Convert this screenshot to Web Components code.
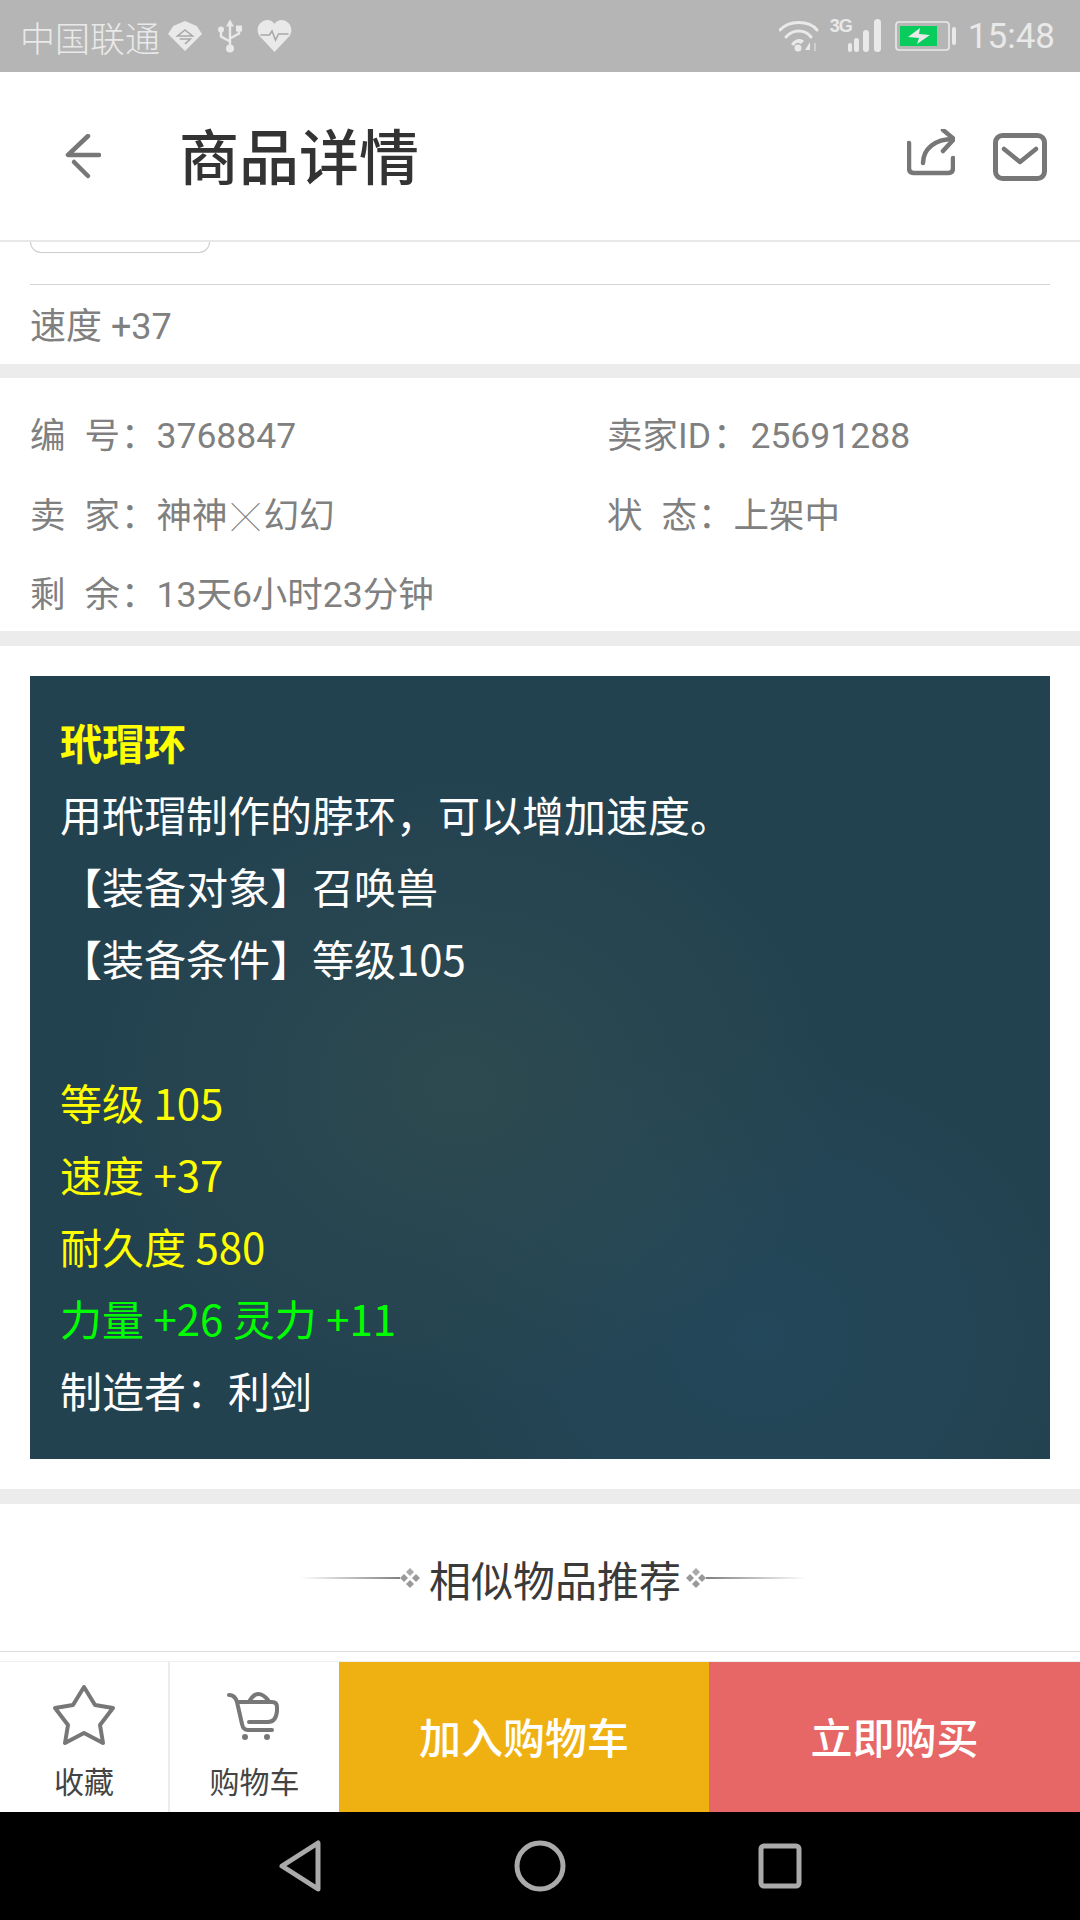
<!DOCTYPE html>
<html lang="zh">
<head>
<meta charset="utf-8">
<title>商品详情</title>
<style>
    html, body{
        margin: 0;
        padding: 0;
        background: #fff;
        font-family: Roboto, "Noto Sans CJK SC", sans-serif;
    }
    body{
        width: 1080px;
        height: 1920px;
        display: flex;
        flex-direction: column;
        overflow: hidden;
    }
    gap-bar{
        display: block;
        height: 14px;
        flex: none;
        background: #ececec;
    }
</style>
</head>
<body>
    <status-bar></status-bar>
    <app-header>商品详情</app-header>
    <spec-row>速度 +37</spec-row>
    <gap-bar></gap-bar>
    <info-grid></info-grid>
    <gap-bar style="height:15px"></gap-bar>
    <item-card></item-card>
    <gap-bar style="height:15px"></gap-bar>
    <section-title>相似物品推荐</section-title>
    <action-bar></action-bar>
    <nav-bar></nav-bar>

<script>
(function(){

    function define(name, html) {
        const template = document.createElement('template');
        template.innerHTML = html;
        window.customElements.define(name, class extends HTMLElement {
            constructor() {
                super();
                this.attachShadow({mode: 'open'});
                this.shadowRoot.appendChild(template.content.cloneNode(true));
            }
        });
    }

    define('status-bar', `
        <style>
            :host{
                display: flex;
                align-items: center;
                height: 72px;
                flex: none;
                background: #b5b5b5;
                color: #e9e9e9;
                padding: 0 25px 0 20px;
                font-size: 35px;
                font-family: "Noto Sans CJK SC", sans-serif;
            }
            svg{ display: block; flex: none; }
            .carrier{ font-weight: 300; margin-right: 8px; }
            .space{ flex: 1; }
            .net{
                align-self: flex-start;
                margin-top: 18px;
                font-family: "Liberation Sans Narrow", "Liberation Sans", sans-serif;
                font-size: 18px;
                line-height: 16px;
                font-weight: 700;
                letter-spacing: -1px;
                width: 18px;
                flex: none;
            }
            .time{ font-family: Roboto, sans-serif; font-size: 35px; margin-left: 11px; }
        </style>
        <span class="carrier">中国联通</span>
        <svg width="34" height="32" viewBox="0 0 32 32" preserveAspectRatio="none" style="margin-right:16px">
            <path d="M16 1 L27 6 L32 14 L16 31 L0 14 L5 6 Z" fill="#e9e9e9"/>
            <path d="M16 10 L23 16 L9 16 Z M11 19 H21 L16 24" fill="none" stroke="#a8a8a8" stroke-width="1.6"/>
        </svg>
        <svg width="24" height="35" viewBox="0 0 24 34" style="margin-right:15px">
            <path d="M12 0 L16 7 H8 Z" fill="#e9e9e9"/>
            <path d="M12 6 V28 M12 22 L3 17 V11 M12 19 L21 14 V10" fill="none" stroke="#e9e9e9" stroke-width="2.4"/>
            <circle cx="12" cy="29" r="4" fill="#e9e9e9"/>
            <circle cx="3" cy="10" r="3" fill="#e9e9e9"/>
            <rect x="18" y="6" width="6" height="6" fill="#e9e9e9"/>
        </svg>
        <svg width="35" height="32" viewBox="0 0 34 32">
            <path d="M17 32 L2 16 C-3 8 3 0 10 0 C13 0 16 2 17 4 C18 2 21 0 24 0 C31 0 37 8 32 16 Z" fill="#e9e9e9"/>
            <path d="M3 15 H12 L14.5 11 L18 20 L21 14 H31" fill="none" stroke="#a8a8a8" stroke-width="1.6"/>
        </svg>
        <span class="space"></span>
        <svg width="40" height="34" viewBox="0 0 40 34" style="margin-right:11px">
            <g fill="none" stroke="#e9e9e9" stroke-linecap="round">
                <path d="M1 11 C10 1 30 1 38 11" stroke-width="3"/>
                <path d="M7 18 C14 10 26 10 32 18" stroke-width="3"/>
            </g>
            <path d="M12 25 C16 19 23 19 25 22 L22 25 C19 23 17 23 15 27 Z" fill="#e9e9e9"/>
            <circle cx="19" cy="29" r="3.5" fill="#e9e9e9"/>
            <path d="M31 23 L26 31 H31 Z" fill="#e9e9e9"/>
            <path d="M36 24 V32" stroke="#cfcfcf" stroke-width="2"/>
        </svg>
        <span class="net">3G</span>
        <svg width="34" height="34" viewBox="18 0 34 34" style="margin-right:13px">
            <g fill="#e9e9e9">
                <rect x="18" y="24" width="4" height="9" rx="2"/>
                <rect x="24" y="19" width="5" height="14" rx="2.5"/>
                <rect x="33" y="11" width="6" height="22" rx="3"/>
                <rect x="44" y="0" width="7" height="33" rx="3.5"/>
            </g>
        </svg>
        <svg width="62" height="30" viewBox="0 0 62 30">
            <rect x="1" y="1" width="53" height="28" rx="3" fill="none" stroke="#e9e9e9" stroke-width="1.6"/>
            <rect x="5" y="5" width="37" height="20" fill="#08cc5c"/>
            <path d="M13 16 L25 7 L24 13 L35 14 L22 23 L24 17 Z" fill="#e9e9e9"/>
            <rect x="57" y="6" width="4" height="18" rx="2" fill="#e9e9e9"/>
        </svg>
        <span class="time">15:48</span>
    `);

    define('app-header', `
        <style>
            :host{
                display: flex;
                align-items: center;
                flex: none;
                height: 168px;
                border-bottom: 2px solid #e8e8e8;
                background: #fff;
                font-family: "Noto Sans CJK SC", sans-serif;
            }
            svg{ display: block; flex: none; }
            .back{ margin: 1px 78px 0 65px; }
            .title{ flex: 1; font-size: 60px; font-weight: 500; color: #333; line-height: 168px; position: relative; top: -2px; }
            .icons{ display: flex; align-items: center; gap: 38px; margin-right: 33px; }
            .share{ margin-top: -6px; }
            .mail{ margin-top: 2px; }
        </style>
        <svg class="back" width="36" height="46" viewBox="0 0 36 46">
            <g fill="none" stroke="#777" stroke-linecap="round" stroke-linejoin="round">
                <path d="M23 2 L3 21 H34" stroke-width="4.5"/>
                <path d="M9 28 L23 42" stroke-width="4.5"/>
            </g>
        </svg>
        <span class="title"><slot></slot></span>
        <div class="icons">
            <svg class="share" width="48" height="48" viewBox="0 0 48 48">
                <g fill="none" stroke="#777" stroke-width="4.5" stroke-linecap="round" stroke-linejoin="round">
                    <path d="M2 14 V39 Q2 44 7 44 H41 Q46 44 46 39 V29"/>
                    <path d="M16 34 C16 20 28 10 46 10"/>
                    <path d="M36 1 L47 10 L36 22"/>
                </g>
            </svg>
            <svg class="mail" width="54" height="48" viewBox="0 0 54 48">
                <rect x="2.5" y="2.5" width="49" height="43" rx="7" fill="none" stroke="#777" stroke-width="5"/>
                <path d="M11 16 L27 29 L43 16" fill="none" stroke="#777" stroke-width="4.5" stroke-linecap="round" stroke-linejoin="round"/>
            </svg>
        </div>
    `);

    define('spec-row', `
        <style>
            :host{
                display: block;
                flex: none;
                background: #fff;
                padding: 0 30px;
                color: #808080;
                font-size: 36px;
                font-family: Roboto, "Noto Sans CJK SC", sans-serif;
            }
            .tag{
                width: 178px;
                height: 10px;
                border: 1px solid #ccc;
                border-top: none;
                border-radius: 0 0 12px 12px;
            }
            .text{
                margin-top: 31px;
                border-top: 1px solid #d4d4d4;
                height: 79px;
                line-height: 85px;
            }
        </style>
        <div class="tag"></div>
        <div class="text"><slot></slot></div>
    `);

    define('info-grid', `
        <style>
            :host{
                display: grid;
                flex: none;
                grid-template-columns: 577px 1fr;
                grid-auto-rows: 40px;
                row-gap: 39.5px;
                background: #fff;
                padding: 38px 30px 16px;
                color: #808080;
                font-size: 35.5px;
                line-height: 40px;
                font-family: Roboto, "Noto Sans CJK SC", sans-serif;
            }
            .k{ display: inline-block; width: 90px; text-align: justify; text-align-last: justify; }
            .c{ margin-left: 1px; }
            .d{ margin: 0 2px; }
            .x{ display: inline-block; font-size: 28px; margin: 0 4px; font-weight: 300; font-family: "Noto Sans CJK SC", sans-serif; }
        </style>
        <div><span class="k">编号</span><span class="c">：</span>3768847</div>
        <div>卖家ID<span class="d">：</span>25691288</div>
        <div><span class="k">卖家</span><span class="c">：</span>神神<span class="x">╳</span>幻幻</div>
        <div><span class="k">状态</span><span class="c">：</span>上架中</div>
        <div><span class="k">剩余</span><span class="c">：</span>13天6小时23分钟</div>
    `);

    define('item-card', `
        <style>
            :host{
                display: block;
                flex: none;
                background: #fff;
                padding: 30px 30px 30px;
            }
            .card{
                height: 783px;
                box-sizing: border-box;
                padding: 30px 30px 0;
                color: #fff;
                font-family: "Noto Sans CJK SC", sans-serif;
                font-size: 42px;
                line-height: 72px;
                background:
                    radial-gradient(ellipse 380px 320px at 430px 410px, rgba(66,90,80,.34), rgba(66,90,80,0)),
                    radial-gradient(ellipse 340px 300px at 730px 660px, rgba(36,80,105,.42), rgba(36,80,105,0)),
                    #234250;
            }
            .n{ color: #ffff00; font-weight: 700; }
            .y{ color: #ffff00; }
            .g{ color: #00ff00; }
            .blank{ height: 72px; }
        </style>
        <div class="card">
            <div class="n">玳瑁环</div>
            <div>用玳瑁制作的脖环，可以增加速度。</div>
            <div>【装备对象】召唤兽</div>
            <div>【装备条件】等级105</div>
            <div class="blank"></div>
            <div class="y">等级 105</div>
            <div class="y">速度 +37</div>
            <div class="y">耐久度 580</div>
            <div class="g">力量 +26 灵力 +11</div>
            <div>制造者：利剑</div>
        </div>
    `);

    define('section-title', `
        <style>
            :host{
                display: flex;
                flex: none;
                align-items: center;
                justify-content: center;
                height: 147px;
                padding-left: 26px;
                border-bottom: 1px solid #dedede;
                background: #fff;
                color: #3a3a3a;
                font-size: 42px;
                font-family: "Noto Sans CJK SC", sans-serif;
            }
            .text{ margin: 0 5px 0 9px; position: relative; top: 1px; }
            .line{ width: 100px; height: 2px; }
            .l{ background: linear-gradient(to right, rgba(130,130,130,0), #808080); }
            .r{ background: linear-gradient(to left, rgba(130,130,130,0), #808080); }
            svg{ display: block; flex: none; }
        </style>
        <span class="line l"></span>
        <svg width="20" height="20" viewBox="0 0 20 20"><g fill="#999"><path d="M10 0 L14 4 L10 8 L6 4 Z" fill="#aaa"/><path d="M4 6 L8 10 L4 14 L0 10 Z"/><path d="M16 6 L20 10 L16 14 L12 10 Z"/><path d="M10 12 L14 16 L10 20 L6 16 Z"/></g></svg>
        <span class="text"><slot></slot></span>
        <svg width="20" height="20" viewBox="0 0 20 20"><g fill="#999"><path d="M10 0 L14 4 L10 8 L6 4 Z" fill="#aaa"/><path d="M4 6 L8 10 L4 14 L0 10 Z"/><path d="M16 6 L20 10 L16 14 L12 10 Z"/><path d="M10 12 L14 16 L10 20 L6 16 Z"/></g></svg>
        <span class="line r"></span>
    `);

    define('action-bar', `
        <style>
            :host{
                display: flex;
                flex: none;
                height: 150px;
                margin-top: 9px;
                border-top: 1px solid #eee;
                background: #fff;
                font-family: "Noto Sans CJK SC", sans-serif;
            }
            .item{
                width: 168px;
                flex: none;
                display: flex;
                flex-direction: column;
                align-items: center;
                color: #444;
                font-size: 30px;
                line-height: 40px;
            }
            .item svg{ display: block; margin-top: 21px; height: 66px; }
            .item span{ margin-top: 11px; }
            .item + .item{ border-left: 2px solid #ececec; width: 169px; }
            .btn{
                display: flex;
                align-items: center;
                justify-content: center;
                color: #fff;
                font-size: 42px;
                font-weight: 500;
                padding-bottom: 4px;
                box-sizing: border-box;
            }
            .buy{ background: #efb112; width: 370px; flex: none; }
            .now{ background: #e76666; flex: 1; }
        </style>
        <div class="item">
            <svg width="66" height="66" viewBox="0 0 66 66">
                <path d="M33 4 L44 22 L62 25 L49 42 L52 60 L33 50 L14 60 L17 42 L4 25 L22 22 Z" fill="none" stroke="#777" stroke-width="4" stroke-linejoin="round"/>
            </svg>
            <span>收藏</span>
        </div>
        <div class="item">
            <svg width="66" height="66" viewBox="0 0 66 66">
                <g fill="none" stroke="#777" stroke-width="4" stroke-linecap="round" stroke-linejoin="round">
                    <path d="M7 12 Q13 12 15 19 L20 41 Q21 47 26 47 H50"/>
                    <path d="M17 19 H50 Q55 19 55 24 V28 Q54 39 46 39 H27"/>
                    <path d="M28 17 Q36 5 46 17"/>
                </g>
                <circle cx="23" cy="54" r="3" fill="#777"/>
                <circle cx="45" cy="54" r="3" fill="#777"/>
            </svg>
            <span>购物车</span>
        </div>
        <div class="btn buy">加入购物车</div>
        <div class="btn now">立即购买</div>
    `);

    define('nav-bar', `
        <style>
            :host{
                display: flex;
                flex: none;
                align-items: center;
                justify-content: center;
                height: 108px;
                background: #000;
                gap: 190px;
            }
            svg{ display: block; }
        </style>
        <svg width="46" height="54" viewBox="0 0 46 54">
            <path d="M4 27 L40 4 V50 Z" fill="none" stroke="#aaa" stroke-width="5" stroke-linejoin="round"/>
        </svg>
        <svg width="52" height="52" viewBox="0 0 52 52">
            <circle cx="26" cy="26" r="23" fill="none" stroke="#aaa" stroke-width="5"/>
        </svg>
        <svg width="46" height="46" viewBox="0 0 46 46">
            <rect x="5" y="3" width="38" height="40" rx="3" fill="none" stroke="#aaa" stroke-width="5"/>
        </svg>
    `);

})();
</script>
</body>
</html>
